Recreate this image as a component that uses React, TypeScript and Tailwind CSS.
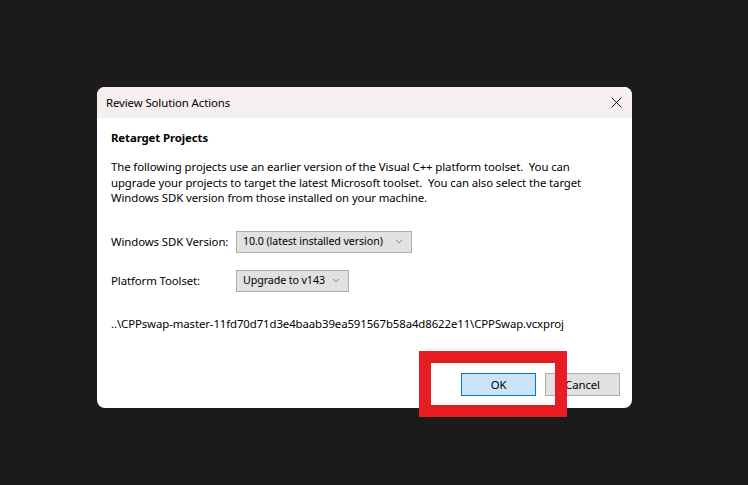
import React from "react";

function Chevron() {
  return (
    <svg width="8" height="5" viewBox="0 0 8 5" className="ml-auto shrink-0">
      <path d="M1 1 L4 4 L7 1" fill="none" stroke="#8a8a8a" strokeWidth="1" />
    </svg>
  );
}

function Dropdown({ value, width }: { value: string; width: string }) {
  return (
    <div className={`flex h-[22px] items-center border border-[#adadad] bg-[#e1e1e1] pl-[6px] pr-[8px] text-[10.7px] ${width}`}>
      <span className="whitespace-nowrap">{value}</span>
      <Chevron />
    </div>
  );
}

export default function App() {
  return (
    <div className="relative h-[485px] w-[748px] bg-[#1b1b1b] pl-[97px] pt-[87px] text-[11.4px] leading-[15.5px] tracking-[-0.1px] text-black" style={{ fontFamily: '"Noto Sans", "Open Sans", sans-serif' }}>
      <div className="flex h-[321px] w-[535px] flex-col overflow-hidden rounded-[8px] bg-white">
        <div className="flex h-[31px] items-center bg-[#f6eff0] pl-[9px] pr-[10px]">
          <span>Review Solution Actions</span>
          <svg width="11" height="11" viewBox="0 0 11 11" className="ml-auto">
            <path d="M0.5 0.5 L10.5 10.5 M10.5 0.5 L0.5 10.5" stroke="#1a1a1a" strokeWidth="1" />
          </svg>
        </div>
        <div className="flex flex-1 flex-col pl-[14px] pr-[12px]">
          <div className="mt-[12px] font-bold">Retarget Projects</div>
          <p className="mt-[13.5px]">
            The following projects use an earlier version of the Visual C++ platform toolset.&nbsp; You can
            <br />
            upgrade your projects to target the latest Microsoft toolset.&nbsp; You can also select the target
            <br />
            Windows SDK version from those installed on your machine.
          </p>
          <div className="mt-[25px] flex items-center">
            <span className="w-[125px] shrink-0 whitespace-nowrap">Windows SDK Version:</span>
            <Dropdown value="10.0 (latest installed version)" width="w-[176px]" />
          </div>
          <div className="mt-[17px] flex items-center">
            <span className="w-[125px] shrink-0 whitespace-nowrap">Platform Toolset:</span>
            <Dropdown value="Upgrade to v143" width="w-[113px]" />
          </div>
          <div className="mt-[24px] whitespace-nowrap">..\CPPswap-master-11fd70d71d3e4baab39ea591567b58a4d8622e11\CPPSwap.vcxproj</div>
          <div className="mt-auto mb-[12px] flex justify-end gap-[9px]">
            <button className="h-[23px] w-[75px] border border-[#0078d4] bg-[#cce4f7]">OK</button>
            <button className="h-[23px] w-[75px] border border-[#adadad] bg-[#e1e1e1]">Cancel</button>
          </div>
        </div>
      </div>
      <div className="absolute left-[419px] top-[351px] h-[66px] w-[148px] border-[12px] border-[#e81c23]" />
    </div>
  );
}
